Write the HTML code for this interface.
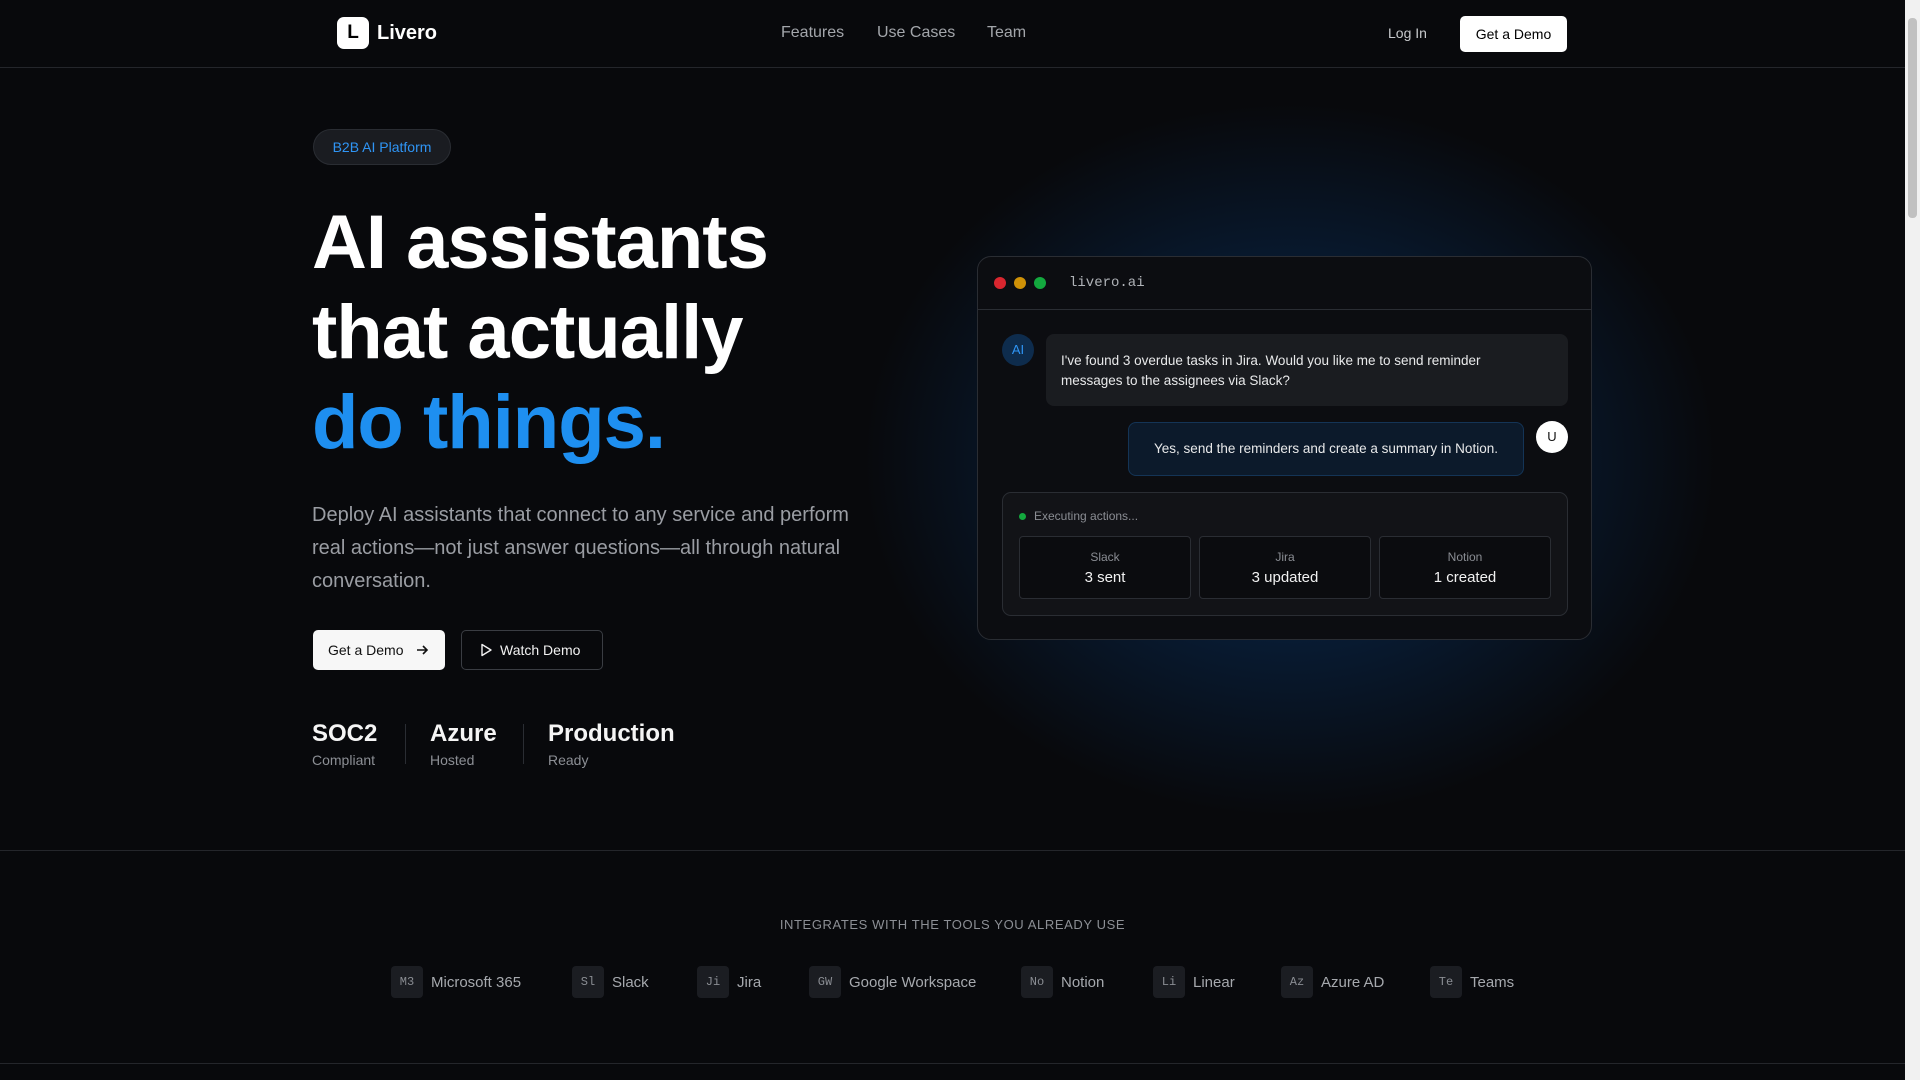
<!DOCTYPE html>
<html><head><meta charset="utf-8"><style>
*{margin:0;padding:0;box-sizing:border-box}
body{width:1920px;height:1080px;overflow:hidden;background:#08090c;font-family:"Liberation Sans",sans-serif;color:#f2f2f2;position:relative}
.a{position:absolute}
.nav{left:0;top:0;width:1905px;height:68px;border-bottom:1px solid #24262b}
.scroll{left:1905px;top:0;width:15px;height:1080px;background:#f1f1f1}
.thumb{left:1908px;top:18px;width:9px;height:200px;background:#c1c1c1;border-radius:4px}
.glow{left:860px;top:100px;width:860px;height:720px;background:radial-gradient(ellipse at center,rgba(10,75,140,.6) 0%,rgba(8,50,100,.4) 38%,rgba(8,9,12,0) 70%)}
.card{left:977px;top:256px;width:615px;height:384px;border:1px solid #2a2d33;border-radius:14px;background:#0c0d11}
.dot{width:12px;height:12px;border-radius:50%;top:277px}
.tile{top:536px;width:172px;height:63px;border:1px solid #2a2d33;border-radius:4px;background:#0b0c0f;text-align:center}
.tile .l{font-size:12px;color:#8a8d93;margin-top:13px}
.tile .v{font-size:15px;color:#f2f2f2;margin-top:5px}
.stat b{display:block;font-size:24px;font-weight:700;color:#f5f5f5}
.stat span{display:block;font-size:14px;color:#8c8f95;margin-top:4px}
.sep{width:1px;height:40px;background:#2a2d33;top:724px}
.int{top:966px;height:32px;display:flex;align-items:center;font-size:15px;color:#a6a9ae}
.int i{font-style:normal;width:32px;height:32px;border-radius:4px;background:#1b1d22;font-family:"Liberation Mono",monospace;font-size:12px;color:#8a8d93;display:flex;align-items:center;justify-content:center;margin-right:8px}
</style></head><body>
<div class="a glow"></div>
<div class="a nav"></div>
<div class="a" style="left:337px;top:17px;width:32px;height:32px;background:#fff;border-radius:7px;color:#000;font-weight:700;font-size:19px;text-align:center;line-height:32px">L</div>
<div class="a" style="left:377px;top:22px;font-size:20px;font-weight:700;color:#fff">Livero</div>
<div class="a" style="left:781px;top:24px;font-size:16px;color:#a3a6ab">Features</div>
<div class="a" style="left:877px;top:24px;font-size:16px;color:#a3a6ab">Use Cases</div>
<div class="a" style="left:987px;top:24px;font-size:16px;color:#a3a6ab">Team</div>
<div class="a" style="left:1388px;top:25px;font-size:14px;color:#c8cacd">Log In</div>
<div class="a" style="left:1460px;top:16px;width:107px;height:36px;background:#fff;border-radius:5px;color:#000;font-size:14px;text-align:center;line-height:36px">Get a Demo</div>

<div class="a" style="left:313px;top:129px;width:138px;height:36px;border:1px solid #2a2d33;background:#1a1c21;border-radius:18px;color:#2f95f5;font-size:14px;text-align:center;line-height:34px">B2B AI Platform</div>
<div class="a" style="left:312px;top:198px;font-size:76px;font-weight:700;line-height:90px;letter-spacing:-1px;color:#fff">AI assistants<br>that actually<br><span style="color:#1e8ff0">do things.</span></div>
<div class="a" style="left:312px;top:499px;width:570px;font-size:20px;line-height:33px;color:#9a9da3">Deploy AI assistants that connect to any service and perform real actions—not just answer questions—all through natural conversation.</div>

<div class="a" style="left:313px;top:630px;width:132px;height:40px;background:#f7f7f7;border-radius:5px;color:#111;font-size:14px;line-height:40px;padding-left:15px">Get a Demo <svg width="14" height="14" viewBox="0 0 14 14" style="vertical-align:-2px;margin-left:8px"><path d="M2 7h10M8 3l4 4-4 4" stroke="#111" stroke-width="1.6" fill="none"/></svg></div>
<div class="a" style="left:461px;top:630px;width:142px;height:40px;border:1px solid #3a3d43;border-radius:5px;color:#f2f2f2;font-size:14px;line-height:38px;padding-left:17px"><svg width="14" height="14" viewBox="0 0 14 14" style="vertical-align:-2px;margin-right:7px"><path d="M3 1.5v11l9-5.5z" stroke="#f2f2f2" stroke-width="1.4" fill="none" stroke-linejoin="round"/></svg>Watch Demo</div>

<div class="a stat" style="left:312px;top:720px"><b>SOC2</b><span>Compliant</span></div>
<div class="a sep" style="left:405px"></div>
<div class="a stat" style="left:430px;top:720px"><b>Azure</b><span>Hosted</span></div>
<div class="a sep" style="left:523px"></div>
<div class="a stat" style="left:548px;top:720px"><b>Production</b><span>Ready</span></div>

<div class="a card"></div>
<div class="a" style="left:978px;top:309px;width:613px;height:1px;background:#2a2d33"></div>
<div class="a dot" style="left:994px;background:#d9262f"></div>
<div class="a dot" style="left:1014px;background:#cf9107"></div>
<div class="a dot" style="left:1034px;background:#13a83e"></div>
<div class="a" style="left:1069px;top:275px;font-family:'Liberation Mono',monospace;font-size:14px;color:#b0b3b8">livero.ai</div>
<div class="a" style="left:1002px;top:334px;width:32px;height:32px;border-radius:50%;background:#0e2c4d;color:#2f95f5;font-size:13px;text-align:center;line-height:32px">AI</div>
<div class="a" style="left:1046px;top:334px;width:522px;height:72px;border-radius:8px;background:#1a1c20;padding:17px 40px 17px 15px;font-size:13.5px;line-height:20px;color:#e8e9ea">I've found 3 overdue tasks in Jira. Would you like me to send reminder messages to the assignees via Slack?</div>
<div class="a" style="left:1128px;top:422px;width:396px;height:54px;border-radius:8px;background:#0c1a2b;border:1px solid #143456;font-size:13.5px;line-height:52px;color:#e8e9ea;text-align:center">Yes, send the reminders and create a summary in Notion.</div>
<div class="a" style="left:1536px;top:421px;width:32px;height:32px;border-radius:50%;background:#fff;color:#111;font-size:13px;text-align:center;line-height:32px">U</div>
<div class="a" style="left:1002px;top:492px;width:566px;height:124px;border:1px solid #2a2d33;border-radius:9px;background:#121317"></div>
<div class="a" style="left:1019px;top:513px;width:7px;height:7px;border-radius:50%;background:#13a83e"></div>
<div class="a" style="left:1034px;top:509px;font-size:12px;color:#8a8d93">Executing actions...</div>
<div class="a tile" style="left:1019px"><div class="l">Slack</div><div class="v">3 sent</div></div>
<div class="a tile" style="left:1199px"><div class="l">Jira</div><div class="v">3 updated</div></div>
<div class="a tile" style="left:1379px"><div class="l">Notion</div><div class="v">1 created</div></div>

<div class="a" style="left:0;top:850px;width:1905px;height:1px;background:#24262b"></div>
<div class="a" style="left:0;top:917px;width:1905px;text-align:center;font-size:13px;letter-spacing:0.6px;color:#8c8f95">INTEGRATES WITH THE TOOLS YOU ALREADY USE</div>
<div class="a int" style="left:391px"><i>M3</i>Microsoft 365</div>
<div class="a int" style="left:572px"><i>Sl</i>Slack</div>
<div class="a int" style="left:697px"><i>Ji</i>Jira</div>
<div class="a int" style="left:809px"><i>GW</i>Google Workspace</div>
<div class="a int" style="left:1021px"><i>No</i>Notion</div>
<div class="a int" style="left:1153px"><i>Li</i>Linear</div>
<div class="a int" style="left:1281px"><i>Az</i>Azure AD</div>
<div class="a int" style="left:1430px"><i>Te</i>Teams</div>
<div class="a" style="left:0;top:1063px;width:1905px;height:1px;background:#24262b"></div>
<div class="a scroll"></div>
<div class="a thumb"></div>
</body></html>
